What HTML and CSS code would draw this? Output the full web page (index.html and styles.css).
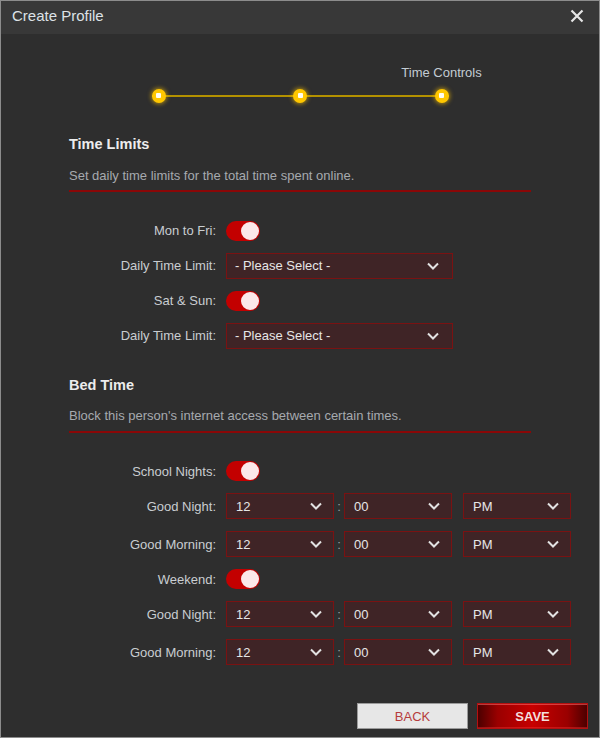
FILE: index.html
```html
<!DOCTYPE html>
<html>
<head>
<meta charset="utf-8">
<link rel="stylesheet" href="styles.css">
</head>
<body>
<div class="dialog">
  <div class="header">
    <span class="title">Create Profile</span>
    <svg class="close" width="14" height="14" viewBox="0 0 14 14"><path d="M1.5 1.5 L12.5 12.5 M12.5 1.5 L1.5 12.5" stroke="#e6e6e6" stroke-width="2.2" fill="none"/></svg>
  </div>
  <div class="content">
    <div class="stepper">
      <div class="step-labels">
        <span class="step-label"></span>
        <span class="step-label"></span>
        <span class="step-label">Time Controls</span>
      </div>
      <div class="step-dots">
        <span class="dot"><i></i></span>
        <span class="dot"><i></i></span>
        <span class="dot"><i></i></span>
      </div>
    </div>

    <h2 class="sec-title first">Time Limits</h2>
    <p class="sec-desc">Set daily time limits for the total time spent online.</p>
    <div class="form">
      <div class="row row-toggle">
        <label class="lbl">Mon to Fri:</label>
        <span class="toggle"><span class="knob"></span></span>
      </div>
      <div class="row">
        <label class="lbl">Daily Time Limit:</label>
        <div class="select wide"><span>- Please Select -</span>
          <svg class="chev" width="12" height="8" viewBox="0 0 12 8"><polyline points="1,1.5 6,6.5 11,1.5" fill="none" stroke="#e2e2e2" stroke-width="2"/></svg></div>
      </div>
      <div class="row row-toggle">
        <label class="lbl">Sat &amp; Sun:</label>
        <span class="toggle"><span class="knob"></span></span>
      </div>
      <div class="row">
        <label class="lbl">Daily Time Limit:</label>
        <div class="select wide"><span>- Please Select -</span>
          <svg class="chev" width="12" height="8" viewBox="0 0 12 8"><polyline points="1,1.5 6,6.5 11,1.5" fill="none" stroke="#e2e2e2" stroke-width="2"/></svg></div>
      </div>
    </div>

    <h2 class="sec-title">Bed Time</h2>
    <p class="sec-desc">Block this person's internet access between certain times.</p>
    <div class="form">
      <div class="row row-toggle">
        <label class="lbl">School Nights:</label>
        <span class="toggle"><span class="knob"></span></span>
      </div>
      <div class="row">
        <label class="lbl">Good Night:</label>
        <div class="select small"><span>12</span><svg class="chev" width="12" height="8" viewBox="0 0 12 8"><polyline points="1,1.5 6,6.5 11,1.5" fill="none" stroke="#e2e2e2" stroke-width="2"/></svg></div>
        <span class="colon">:</span>
        <div class="select small"><span>00</span><svg class="chev" width="12" height="8" viewBox="0 0 12 8"><polyline points="1,1.5 6,6.5 11,1.5" fill="none" stroke="#e2e2e2" stroke-width="2"/></svg></div>
        <div class="select small ampm"><span>PM</span><svg class="chev" width="12" height="8" viewBox="0 0 12 8"><polyline points="1,1.5 6,6.5 11,1.5" fill="none" stroke="#e2e2e2" stroke-width="2"/></svg></div>
      </div>
      <div class="row">
        <label class="lbl">Good Morning:</label>
        <div class="select small"><span>12</span><svg class="chev" width="12" height="8" viewBox="0 0 12 8"><polyline points="1,1.5 6,6.5 11,1.5" fill="none" stroke="#e2e2e2" stroke-width="2"/></svg></div>
        <span class="colon">:</span>
        <div class="select small"><span>00</span><svg class="chev" width="12" height="8" viewBox="0 0 12 8"><polyline points="1,1.5 6,6.5 11,1.5" fill="none" stroke="#e2e2e2" stroke-width="2"/></svg></div>
        <div class="select small ampm"><span>PM</span><svg class="chev" width="12" height="8" viewBox="0 0 12 8"><polyline points="1,1.5 6,6.5 11,1.5" fill="none" stroke="#e2e2e2" stroke-width="2"/></svg></div>
      </div>
      <div class="row row-toggle">
        <label class="lbl">Weekend:</label>
        <span class="toggle"><span class="knob"></span></span>
      </div>
      <div class="row">
        <label class="lbl">Good Night:</label>
        <div class="select small"><span>12</span><svg class="chev" width="12" height="8" viewBox="0 0 12 8"><polyline points="1,1.5 6,6.5 11,1.5" fill="none" stroke="#e2e2e2" stroke-width="2"/></svg></div>
        <span class="colon">:</span>
        <div class="select small"><span>00</span><svg class="chev" width="12" height="8" viewBox="0 0 12 8"><polyline points="1,1.5 6,6.5 11,1.5" fill="none" stroke="#e2e2e2" stroke-width="2"/></svg></div>
        <div class="select small ampm"><span>PM</span><svg class="chev" width="12" height="8" viewBox="0 0 12 8"><polyline points="1,1.5 6,6.5 11,1.5" fill="none" stroke="#e2e2e2" stroke-width="2"/></svg></div>
      </div>
      <div class="row">
        <label class="lbl">Good Morning:</label>
        <div class="select small"><span>12</span><svg class="chev" width="12" height="8" viewBox="0 0 12 8"><polyline points="1,1.5 6,6.5 11,1.5" fill="none" stroke="#e2e2e2" stroke-width="2"/></svg></div>
        <span class="colon">:</span>
        <div class="select small"><span>00</span><svg class="chev" width="12" height="8" viewBox="0 0 12 8"><polyline points="1,1.5 6,6.5 11,1.5" fill="none" stroke="#e2e2e2" stroke-width="2"/></svg></div>
        <div class="select small ampm"><span>PM</span><svg class="chev" width="12" height="8" viewBox="0 0 12 8"><polyline points="1,1.5 6,6.5 11,1.5" fill="none" stroke="#e2e2e2" stroke-width="2"/></svg></div>
      </div>
    </div>
  </div>
  <div class="actions">
    <button class="btn btn-back">BACK</button>
    <button class="btn btn-save">SAVE</button>
  </div>
</div>
</body>
</html>
```

FILE: styles.css
```css
* { box-sizing: border-box; }
html, body { margin: 0; padding: 0; background: #2e2e2e; }
body { font-family: "Liberation Sans", Arial, sans-serif; }

.dialog {
  width: 600px;
  height: 738px;
  border: 1px solid #8c8c8c;
  background: #2e2e2e;
  display: flex;
  flex-direction: column;
  overflow: hidden;
}

.header {
  height: 33px;
  flex: none;
  background: #383838;
  display: flex;
  align-items: center;
  justify-content: space-between;
  padding: 0 15px 4px 11px;
}
.title {
  color: #dde2e6;
  font-size: 15px;
  line-height: 18px;
}
.close { display: block; margin-top: 0; }

.content {
  padding: 0 68px;
}

/* stepper */
.stepper {
  width: 297px;
  margin: 31px auto 0;
}
.step-labels, .step-dots {
  display: flex;
  justify-content: space-between;
}
.step-label {
  width: 14px;
  display: flex;
  justify-content: center;
  white-space: nowrap;
  color: #c3ccd3;
  font-size: 13px;
  line-height: 16px;
  height: 16px;
}
.step-dots {
  margin-top: 7.5px;
  background: linear-gradient(#b39100, #b39100) center / 100% 2px no-repeat;
}
.dot {
  width: 14px;
  height: 14px;
  border-radius: 50%;
  background: #ffc700;
  box-shadow: 0 0 4px 1px rgba(255, 196, 0, 0.6);
  display: flex;
  align-items: center;
  justify-content: center;
}
.dot i {
  width: 5px;
  height: 5px;
  background: #fffdf2;
  border-radius: 1px;
}

/* sections */
.sec-title {
  margin: 27px 0 0;
  font-size: 14.5px;
  line-height: 18px;
  font-weight: bold;
  color: #ececec;
}
.sec-title.first { margin-top: 32.5px; }
.sec-desc {
  margin: 14.5px 0 0;
  padding-bottom: 6.5px;
  font-size: 13px;
  line-height: 16px;
  color: #a6aaae;
  border-bottom: 2px solid #8a0707;
}

.form {
  margin-top: 28px;
  display: flex;
  flex-direction: column;
  gap: 12px;
}
.form + .sec-title { margin-top: 27px; }
.sec-title + .sec-desc + .form { margin-top: 28.5px; }
.row {
  display: flex;
  align-items: center;
  height: 26px;
}
.row > * { flex: none; }
.row-toggle { height: 20px; }
.lbl {
  width: 147px;
  margin-right: 10px;
  text-align: right;
  font-size: 13px;
  color: #c9cdd1;
  white-space: nowrap;
}

.toggle {
  width: 34px;
  height: 20px;
  border-radius: 10px;
  background: #c30000;
  display: flex;
  align-items: center;
  justify-content: flex-end;
  padding-right: 1px;
}
.knob {
  width: 18px;
  height: 18px;
  border-radius: 50%;
  background: #fbe8e9;
}

.select {
  height: 26px;
  border: 1px solid #7a1212;
  background: #3f2426;
  display: flex;
  align-items: center;
  justify-content: space-between;
  color: #e6e6e6;
  font-size: 13px;
}
.select.wide {
  width: 227px;
  padding: 0 13px 0 8px;
}
.select.small {
  width: 108px;
  padding: 0 11px 0 9px;
}
.select.ampm { margin-left: 11px; }
.chev { display: block; }
.colon {
  width: 10px;
  text-align: center;
  color: #9a9ea2;
  font-size: 13px;
}

/* actions */
.actions {
  display: flex;
  justify-content: flex-end;
  gap: 9px;
  padding: 0 11px 0 0;
  margin-top: 38px;
}
.btn {
  width: 111px;
  height: 26px;
  font-family: "Liberation Sans", Arial, sans-serif;
  font-size: 13px;
  padding: 0;
  cursor: pointer;
}
.btn-back {
  background: #e7e7e7;
  border: 1px solid #9b9b9b;
  color: #b63c3c;
}
.btn-save {
  border: 1px solid #b41010;
  color: #f3dede;
  font-weight: bold;
  background: linear-gradient(to right, #4c0000 0%, #9a0000 18%, #c70000 50%, #9a0000 82%, #4c0000 100%);
  box-shadow: inset 0 1px 0 rgba(255, 110, 110, 0.55), inset 0 -1px 0 rgba(255, 60, 60, 0.35);
}
```
